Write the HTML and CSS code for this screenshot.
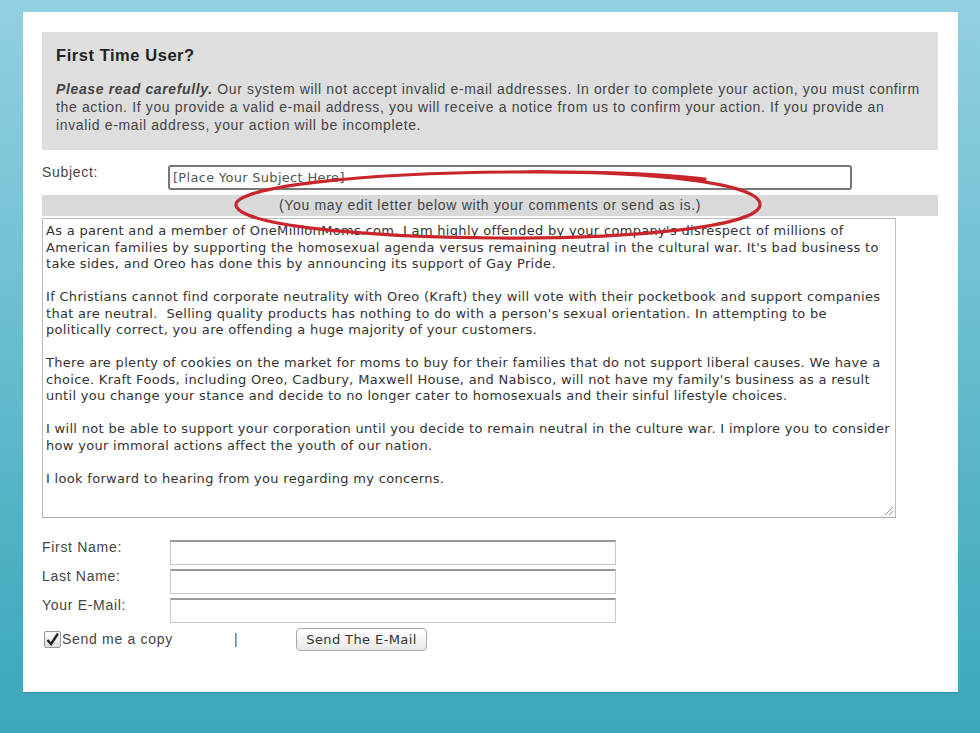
FILE: index.html
```html
<!DOCTYPE html>
<html>
<head>
<meta charset="utf-8">
<link rel="stylesheet" href="styles.css">
</head>
<body>
<div class="panel">
  <div class="notice">
    <h2 class="notice-title">First Time User?</h2>
    <p class="notice-text"><b><i>Please read carefully.</i></b> Our system will not accept invalid e-mail addresses. In order to complete your action, you must confirm<br>the action. If you provide a valid e-mail address, you will receive a notice from us to confirm your action. If you provide an<br>invalid e-mail address, your action will be incomplete.</p>
  </div>
  <div class="subject-row">
    <span class="label subject-label">Subject:</span>
    <div class="subject-input">[Place Your Subject Here]</div>
  </div>
  <div class="edit-bar">(You may edit letter below with your comments or send as is.)</div>
  <div class="letter">
    <p>As a parent and a member of OneMillionMoms.com. I am highly offended by your company's disrespect of millions of<br>American families by supporting the homosexual agenda versus remaining neutral in the cultural war. It's bad business to<br>take sides, and Oreo has done this by announcing its support of Gay Pride.</p>
    <p>If Christians cannot find corporate neutrality with Oreo (Kraft) they will vote with their pocketbook and support companies<br>that are neutral.&nbsp; Selling quality products has nothing to do with a person's sexual orientation. In attempting to be<br>politically correct, you are offending a huge majority of your customers.</p>
    <p>There are plenty of cookies on the market for moms to buy for their families that do not support liberal causes. We have a<br>choice. Kraft Foods, including Oreo, Cadbury, Maxwell House, and Nabisco, will not have my family's business as a result<br>until you change your stance and decide to no longer cater to homosexuals and their sinful lifestyle choices.</p>
    <p>I will not be able to support your corporation until you decide to remain neutral in the culture war. I implore you to consider<br>how your immoral actions affect the youth of our nation.</p>
    <p>I look forward to hearing from you regarding my concerns.</p>
    <svg class="grip" width="12" height="12" viewBox="0 0 12 12"><path d="M11 3 L3 11 M11 7 L7 11" stroke="#999" stroke-width="1"/></svg>
  </div>
  <div class="fields">
    <span class="label">First Name:</span><div class="field"></div>
    <span class="label">Last Name:</span><div class="field"></div>
    <span class="label">Your E-Mail:</span><div class="field"></div>
  </div>
  <div class="send-row">
    <span class="copy"><span class="checkbox"><svg width="15" height="15" viewBox="0 0 15 15"><path d="M2.5 8 L6 12 L13 1.5" fill="none" stroke="#222" stroke-width="2.4"/></svg></span>Send me a copy</span>
    <span class="sep">|</span>
    <span class="button">Send The E-Mail</span>
  </div>
  <svg class="circle" width="540" height="80" viewBox="0 0 540 80">
    <path d="M290 7 C 420 6, 532 18, 530 40 C 528 62, 400 74, 268 73 C 130 72, 8 60, 6 40 C 5 22, 130 8, 280 7 C 370 6, 430 9, 475 14" fill="none" stroke="#c8262b" stroke-width="3.2" stroke-linecap="round"/>
  </svg>
</div>
</body>
</html>
```
FILE: styles.css
```css
html, body {
  margin: 0;
  padding: 0;
}
body {
  width: 980px;
  height: 733px;
  background: linear-gradient(180deg, #92d0e1 0%, #6fc0d3 40%, #49aec1 80%, #3fa7ba 100%);
  overflow: hidden;
  font-family: "Liberation Sans", Arial, sans-serif;
  color: #333;
}
.panel {
  position: relative;
  margin: 12px 0 0 23px;
  width: 935px;
  height: 680px;
  box-sizing: border-box;
  background: #fff;
  padding: 20px 20px 0 19px;
  box-shadow: 0 1px 0 #2f8fa0;
}
.notice {
  background: #dedede;
  padding: 14px 10px 0 14px;
  height: 118px;
  box-sizing: border-box;
}
.notice-title {
  margin: 0 0 15px 0;
  font-size: 16.5px;
  line-height: 19px;
  letter-spacing: 0.55px;
  font-weight: bold;
  color: #222;
}
.notice-text {
  margin: 0;
  font-size: 14px;
  letter-spacing: 0.64px;
  line-height: 18px;
  color: #444;
  white-space: nowrap;
}
.subject-row {
  display: flex;
  align-items: center;
  margin-top: 13px;
  height: 28px;
}
.label {
  font-size: 14px;
  letter-spacing: 0.7px;
  color: #444;
}
.subject-label {
  width: 126px;
  align-self: flex-start;
  margin-top: 1px;
}
.subject-input {
  width: 684px;
  height: 25px;
  box-sizing: border-box;
  border: 2px solid #777;
  border-radius: 3px;
  font-family: "DejaVu Sans", Verdana, sans-serif;
  font-size: 13px;
  letter-spacing: 0.3px;
  line-height: 21px;
  padding-left: 3px;
  color: #555;
  background: #fff;
  white-space: nowrap;
}
.edit-bar {
  margin-top: 4px;
  height: 21px;
  background: #d9d9d9;
  font-size: 14px;
  letter-spacing: 0.68px;
  line-height: 21px;
  text-align: center;
  color: #444;
}
.letter {
  position: relative;
  margin-top: 2px;
  width: 854px;
  height: 300px;
  box-sizing: border-box;
  border: 1px solid #bbb;
  border-bottom-color: #aaa;
  padding: 4px 3px;
  font-family: "DejaVu Sans", Verdana, sans-serif;
  font-size: 13px;
  letter-spacing: 0.31px;
  line-height: 16.5px;
  color: #333;
  white-space: nowrap;
}
.letter p {
  margin: 0 0 16.5px 0;
}
.grip {
  position: absolute;
  right: 1px;
  bottom: 1px;
}
.fields {
  display: grid;
  grid-template-columns: 128px 446px;
  grid-auto-rows: 25px;
  row-gap: 4px;
  margin-top: 22px;
}
.fields .label {
  line-height: 15px;
}
.field {
  box-sizing: border-box;
  border: 1px solid #c8c8c8;
  border-top: 2px solid #999;
  background: #fff;
}
.send-row {
  display: flex;
  align-items: center;
  margin-top: 4px;
  height: 24px;
  font-size: 14px;
  letter-spacing: 0.7px;
  color: #444;
}
.copy {
  display: flex;
  align-items: center;
  width: 190px;
  margin-left: 2px;
}
.checkbox {
  width: 15px;
  height: 15px;
  border: 1px solid #999;
  border-radius: 2px;
  background: linear-gradient(#fff, #ddd);
  margin-right: 1px;
  display: inline-flex;
}
.sep {
  width: 62px;
  color: #555;
}
.button {
  display: inline-block;
  height: 23px;
  line-height: 21px;
  box-sizing: border-box;
  width: 131px;
  border: 1px solid #aaa;
  border-radius: 4px;
  background: linear-gradient(#fff, #e8e8e8);
  font-family: "DejaVu Sans", Verdana, sans-serif;
  font-size: 13px;
  letter-spacing: 0.4px;
  color: #333;
  text-align: center;
}
.circle {
  position: absolute;
  left: 207px;
  top: 153px;
}
```
